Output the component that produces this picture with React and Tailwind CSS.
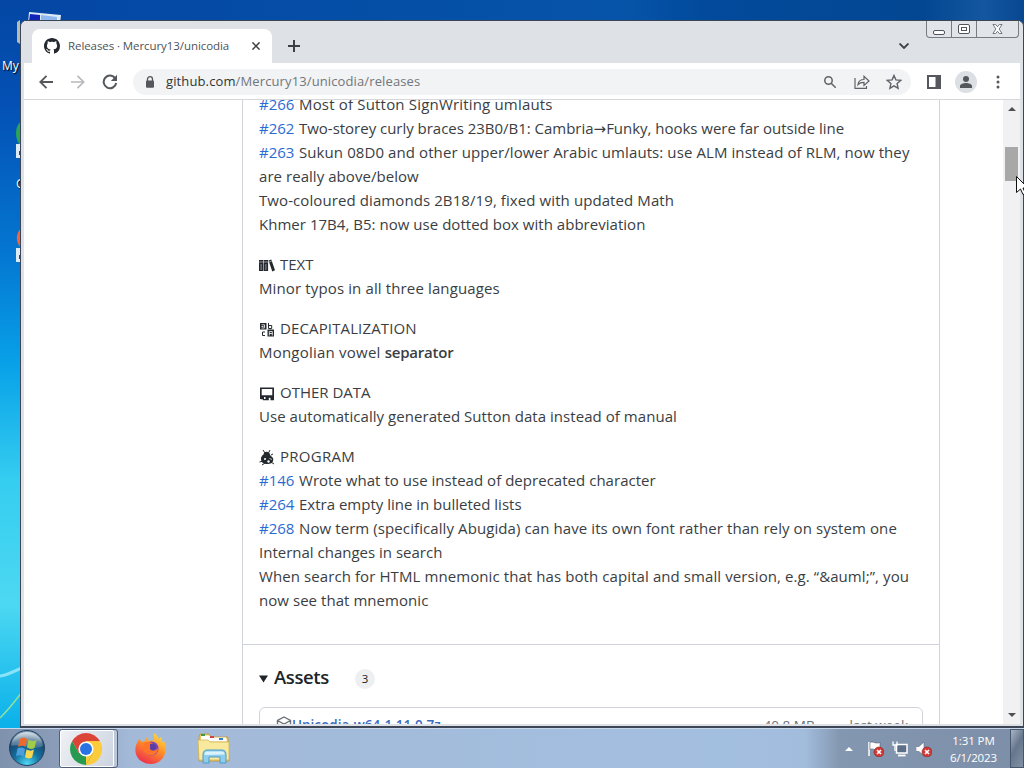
import React from "react";

function Line({ issue, track = "", children }) {
  return (
    <div className="flex h-6 items-center whitespace-pre leading-6">
      {issue && <span className="w-10 text-[#2a6bd2]">{issue}</span>}
      <span className={track}>{children}</span>
    </div>
  );
}

function Heading({ icon, track, children }) {
  return (
    <div className="flex h-6 items-center whitespace-pre leading-6">
      <svg viewBox="0 0 16 16" className="mr-[5px] mt-[3px] h-4 w-4" fill="#24292f">{icon}</svg>
      <span className={track}>{children}</span>
    </div>
  );
}

const books = (
  <g>
    <path d="M0 2h4.300v11H0zM4.800 2h4.300v11H4.800zM9.500 2.600l2.800-1 3.700 10.600-2.700 1.200z" />
    <path d="M0 4h9M2.100 6v6M6.900 6v6M10 4l2.800-1" stroke="#fff" strokeWidth=".5" fill="none" />
  </g>
);
const letters = (
  <g>
    <path d="M1 1h6.500v6.500H1z" />
    <path d="M2.500 2.800h3v3M2.500 4.500h2M2.500 6h3" stroke="#fff" strokeWidth=".8" fill="none" />
    <path d="M9.500 1v5.500h3.200v-3H9.500M6 10H3.500v3.500H6" stroke="#24292f" strokeWidth="1" fill="none" />
    <path d="M8.500 7.500H15v7H8.500z" />
    <path d="M10.300 13.500v-4h3v4M10.300 11.500h3" stroke="#fff" strokeWidth=".8" fill="none" />
  </g>
);
const floppy = (
  <path fillRule="evenodd" d="M1 1.500h14v12.800h-3.500v-2.600H9.800v2.600H4v-.8L1 13zM2.700 3v6.300h10.600V3zM5 11v2h1.500v-2z" />
);
const bug = (
  <g>
    <path d="M4.500 4.500C5 2 7 1.500 8.500 2c2 .5 2.500 1.500 2.500 3l3 3c1 3-1 6-5 6-5 0-7-2-7-5 0-2 1-3.500 2.500-4.500z" />
    <path d="M4 0l2 3M11 0L9.500 3M2 8l3 1M.5 12l4-1M3 15l3-2M12 5l2-1M12 12l3 2" stroke="#24292f" strokeWidth="1" fill="none" />
    <circle cx="6" cy="9" r="1" fill="#fff" />
    <circle cx="9.500" cy="11.500" r="1.200" fill="#fff" />
    <path d="M10.500 8.500l2.500 1" stroke="#fff" strokeWidth=".7" />
  </g>
);

function TabStrip() {
  return (
    <div className="flex h-[42px] items-start bg-[#dee1e6]">
      <div className="ml-2 mt-2 flex h-[34px] w-[240px] items-center rounded-t-lg bg-white pl-3">
        <svg viewBox="0 0 16 16" className="h-4 w-4" fill="#24292f">
          <path d="M8 0C3.580 0 0 3.580 0 8c0 3.540 2.290 6.530 5.470 7.590.4.070.55-.17.55-.38 0-.19-.010-.82-.010-1.490-2.010.37-2.530-.49-2.690-.94-.090-.23-.48-.94-.82-1.130-.28-.15-.68-.52-.010-.53.63-.010 1.080.58 1.230.82.72 1.210 1.870.87 2.330.66.070-.52.28-.87.51-1.070-1.780-.2-3.640-.89-3.640-3.950 0-.87.31-1.590.82-2.150-.080-.2-.36-1.020.080-2.120 0 0 .67-.21 2.200.82.64-.18 1.320-.27 2-.27s1.360.090 2 .27c1.530-1.040 2.200-.82 2.200-.82.44 1.100.16 1.920.080 2.120.51.56.82 1.270.82 2.150 0 3.070-1.870 3.750-3.650 3.950.29.25.54.73.54 1.480 0 1.070-.010 1.930-.010 2.200 0 .21.15.46.55.38A8.010 8.010 0 0 0 16 8c0-4.420-3.580-8-8-8z" />
        </svg>
        <span className="ml-2 w-[184px] whitespace-nowrap text-[11.500px] tracking-[-0.08px] text-[#505357]">Releases · Mercury13/unicodia</span>
        <svg viewBox="0 0 8 8" className="h-2 w-2" stroke="#3c4043" strokeWidth="1.5"><path d="M.4.4l7.200 7.200M7.600.4L.4 7.600" /></svg>
      </div>
      <svg viewBox="0 0 12 12" className="ml-4 mt-[19px] h-3 w-3" stroke="#3c4043" strokeWidth="2"><path d="M6 0v12M0 6h12" /></svg>
      <svg viewBox="0 0 10 6" className="ml-auto mr-[17px] mt-[22px] h-1.5 w-2.5" fill="none" stroke="#3c4043" strokeWidth="1.800"><path d="M.5.5L5 5l4.500-4.500" /></svg>
      <div className="mr-px flex h-[17px] w-[93px] items-stretch divide-x divide-[#777b82] rounded-b border border-t-0 border-[#777b82] bg-[#e1e4e9]">
        <div className="flex w-[25px] items-center justify-center pt-1.5">
          <div className="h-[5px] w-3 rounded-[2px] border border-[#50545c] bg-white" />
        </div>
        <div className="flex w-[25px] items-center justify-center">
          <div className="flex h-[10px] w-3 items-center justify-center rounded-[2px] border border-[#50545c] bg-white">
            <div className="h-1 w-1.5 border border-[#50545c]" />
          </div>
        </div>
        <div className="flex flex-1 items-center justify-center">
          <svg viewBox="0 0 12 11" className="h-[10px] w-[11px]" fill="#fff" stroke="#676b73">
            <path d="M1 .5h3l2 2.500L8 .5h3L7.800 5.500l3.200 5H8L6 8l-2 2.500H1l3.200-5z" />
          </svg>
        </div>
      </div>
    </div>
  );
}

function Toolbar() {
  return (
    <div className="flex h-[37px] items-center border-b border-[#d5d7da] bg-white pl-[15px] pt-px">
      <svg viewBox="0 0 14 14" className="h-3.5 w-3.5" fill="none" stroke="#54575b" strokeWidth="1.800"><path d="M14 7H1.500M7.500.8L1.300 7l6.200 6.200" /></svg>
      <svg viewBox="0 0 14 14" className="ml-[18px] h-3.5 w-3.5" fill="none" stroke="#b7b9bc" strokeWidth="1.700"><path d="M0 7h12.500M6.500.8L12.700 7l-6.200 6.200" /></svg>
      <svg viewBox="0 0 16 16" className="ml-[17px] h-4 w-4" fill="none" stroke="#54575b" strokeWidth="2"><path d="M13.300 4.500A6.300 6.300 0 1 0 14.200 9" /><path d="M15 .8V7H8.800z" fill="#54575b" stroke="none" /></svg>
      <div className="ml-[15px] flex h-[26px] w-[778px] items-center rounded-full bg-[#f1f3f4] pl-3">
        <svg viewBox="0 0 10 12" className="h-3 w-2.5"><path d="M2.500 5V3.200a2.500 2.500 0 0 1 5 0V5" fill="none" stroke="#54575b" strokeWidth="1.300" /><rect x="1" y="4.500" width="8" height="7.200" rx="1" fill="#54575b" /></svg>
        <span className="ml-[11px] whitespace-nowrap text-[13px] tracking-[0.12px] text-[#72767b]"><span className="text-[#303336]">github.com</span>/Mercury13/unicodia/releases</span>
        <svg viewBox="0 0 12 12" className="ml-auto h-3 w-3" fill="none" stroke="#5f6368" strokeWidth="1.500"><circle cx="4.500" cy="4.500" r="3.700" /><path d="M7.200 7.200l4.500 4.500" /></svg>
        <svg viewBox="0 0 16 14" className="ml-[18px] h-3.5 w-4" fill="none" stroke="#5f6368" strokeWidth="1.200"><path d="M1 3v10.300h11.500V11M4 9.500c.5-3.500 2.500-5 6-5V1.300l5 4.700-5 4.500V7.400c-3 0-4.700.6-6 2.100z" /></svg>
        <svg viewBox="0 0 16 16" className="ml-4 mr-[9px] h-4 w-4" fill="none" stroke="#5f6368" strokeWidth="1.400"><path d="M8 1.500l1.900 4.400 4.800.5-3.600 3.200 1 4.700L8 11.900l-4.100 2.400 1-4.700L1.300 6.400l4.800-.5z" /></svg>
      </div>
      <svg viewBox="0 0 14 14" className="ml-4 h-3.5 w-3.5"><path fillRule="evenodd" d="M0 0h14v14H0zM2 2v10h6.500V2z" fill="#54575b" /></svg>
      <div className="ml-[14px] flex h-[22px] w-[22px] items-center justify-center rounded-full bg-[#dcdfe4]">
        <svg viewBox="0 0 12 12" className="h-3 w-3" fill="#54575b"><circle cx="6" cy="3" r="3" /><path d="M0 12V10c0-2 3.500-3 6-3s6 1 6 3v2z" /></svg>
      </div>
      <svg viewBox="0 0 4 14" className="ml-[19px] h-3.5 w-1" fill="#54575b"><circle cx="2" cy="2" r="1.500" /><circle cx="2" cy="7" r="1.500" /><circle cx="2" cy="12" r="1.500" /></svg>
    </div>
  );
}

function Scrollbar() {
  return (
    <div className="flex w-[17px] shrink-0 flex-col items-center bg-[#f1f1f3]">
      <svg viewBox="0 0 8 4" className="mt-[7px] h-1 w-2" fill="#505050"><path d="M4 0l4 4H0z" /></svg>
      <div className="mt-9 h-[34px] w-[13px] bg-[#a8a8a8]" />
      <svg viewBox="0 0 8 4" className="mb-[7px] mt-auto h-1 w-2" fill="#505050"><path d="M0 0h8L4 4z" /></svg>
    </div>
  );
}

function Release() {
  return (
    <div className="ml-[218px] h-[640px] w-[698px] shrink-0 border-x border-[#d0d4da] text-[15px] text-[#3a3e43]">
      <div className="-mt-2 flex flex-col gap-4 border-b border-[#d0d4da] px-4 pb-8">
        <div>
          <Line issue="#266" track="tracking-[0.18px]">Most of Sutton SignWriting umlauts</Line>
          <Line issue="#262" track="tracking-[-0.02px]">Two-storey curly braces 23B0/B1: Cambria<span className="font-['DejaVu_Sans']">→</span>Funky, hooks were far outside line</Line>
          <Line issue="#263" track="tracking-[0.09px]">Sukun 08D0 and other upper/lower Arabic umlauts: use ALM instead of RLM, now they</Line>
          <Line track="tracking-[0.05px]">are really above/below</Line>
          <Line track="tracking-[0.09px]">Two-coloured diamonds 2B18/19, fixed with updated Math</Line>
          <Line track="tracking-[0.03px]">Khmer 17B4, B5: now use dotted box with abbreviation</Line>
        </div>
        <div>
          <Heading icon={books}>TEXT</Heading>
          <Line track="tracking-[0.13px]">Minor typos in all three languages</Line>
        </div>
        <div>
          <Heading icon={letters} track="tracking-[0.13px]">DECAPITALIZATION</Heading>
          <Line track="tracking-[0.22px]">Mongolian vowel <span className="font-semibold tracking-[-0.2px]">separator</span></Line>
        </div>
        <div>
          <Heading icon={floppy}>OTHER DATA</Heading>
          <Line track="tracking-[0.05px]">Use automatically generated Sutton data instead of manual</Line>
        </div>
        <div>
          <Heading icon={bug} track="tracking-[0.28px]">PROGRAM</Heading>
          <Line issue="#146" track="tracking-[0.03px]">Wrote what to use instead of deprecated character</Line>
          <Line issue="#264">Extra empty line in bulleted lists</Line>
          <Line issue="#268" track="tracking-[0.09px]">Now term (specifically Abugida) can have its own font rather than rely on system one</Line>
          <Line>Internal changes in search</Line>
          <Line track="tracking-[0.09px]">When search for HTML mnemonic that has both capital and small version, e.g. “&amp;auml;”, you</Line>
          <Line track="tracking-[0.05px]">now see that mnemonic</Line>
        </div>
      </div>
      <div className="px-4 pt-[17px]">
        <div className="flex h-[30px] items-center text-[#202428]">
          <svg viewBox="0 0 10 8" className="mt-1 h-2 w-[9px]" fill="#202428"><path d="M0 0h10L5 8z" /></svg>
          <span className="ml-1.5 w-[57px] whitespace-nowrap text-[18.500px] font-semibold tracking-[-0.4px]">Assets</span>
          <span className="ml-[24px] mt-[3px] flex h-5 w-5 items-center justify-center rounded-full bg-[#eeeff1] text-[11.500px]">3</span>
        </div>
        <div className="mt-[15px] flex h-10 items-start rounded-t-md border border-[#d0d4da] pl-4 pr-[14px] pt-[7px] text-[13.500px]">
          <svg viewBox="0 0 16 16" className="mt-px h-4 w-4" fill="none" stroke="#6a7078" strokeWidth="1.400"><path d="M8 1l6.500 3.500v7L8 15l-6.500-3.500v-7zM1.500 4.500L8 8l6.500-3.500M8 8v7" /></svg>
          <span className="whitespace-nowrap font-semibold leading-5 text-[#3a6cc0]">Unicodia-w64-1.11.0.7z</span>
          <span className="ml-auto leading-5 text-[#6a7078]">40.8 MB</span>
          <span className="ml-[35px] leading-5 text-[#6a7078]">last week</span>
        </div>
      </div>
    </div>
  );
}

function Badge() {
  return <g><circle cx="11" cy="11" r="5" fill="#d23a36" stroke="#8e2224" strokeWidth=".6" /><path d="M9 9l4 4M13 9l-4 4" stroke="#fff" strokeWidth="1.600" /></g>;
}

function Taskbar() {
  return (
    <div className="flex h-10 items-stretch border-t border-[#c8d8ea] bg-linear-[90deg,#7f92ad_0px,#8b9db8_60px,#a3b9d8_130px,#a3bfe0_720px,#a2bcdc_805px,#8497b0_840px,#7d8fa8_1024px]">
      <svg viewBox="0 0 38 38" className="ml-2 h-[38px] w-[38px]">
        <defs>
          <radialGradient id="orb" cx=".5" cy=".95" r=".95"><stop offset="0" stopColor="#4fd8f4" /><stop offset=".4" stopColor="#13719f" /><stop offset=".75" stopColor="#17476f" /><stop offset="1" stopColor="#8fa9c0" /></radialGradient>
          <linearGradient id="shine" x2="0" y2="1"><stop offset="0" stopColor="#fff" stopOpacity=".7" /><stop offset="1" stopColor="#fff" stopOpacity=".15" /></linearGradient>
        </defs>
        <circle cx="19" cy="19" r="17.500" fill="url(#orb)" stroke="#24405e" />
        <path d="M3 17C4 8 11 3 19 3s15 5 16 14c-8 5-20-3-32 0z" fill="url(#shine)" />
        <path d="M12 10c3-2 5-1 7 0l-1.500 8c-3-2-5-1-7.500 0z" fill="#ee6a2c" />
        <path d="M20.500 10.500c3 2 5 1.500 8 .5l-2 8c-3 1.500-5 1-7.500-.5z" fill="#a0cc48" />
        <path d="M9.500 19.500c3-1.500 5-1 7.500.5l-1.500 7.500c-3-2-5-1.500-7.500-.5z" fill="#4e9ede" />
        <path d="M18.500 20.500c3 1.500 5 1.500 7.500 0l-2 8c-3 1.500-5 1-7-.5z" fill="#fbd650" />
      </svg>
      <div className="ml-[13px] flex w-[59px] rounded-[3px] border border-[#4f5f77] bg-[#bcc7d8]">
        <div className="flex w-[54px] items-center justify-center rounded-[2px] border border-white bg-linear-[120deg,#eef1f5,#ccd4df] pr-0.5">
          <svg viewBox="0 0 32 32" className="h-8 w-8">
            <path d="M16 16L2.150 8A16 16 0 0 1 29.850 8z" fill="#dc4437" />
            <path d="M16 16V8h13.860A16 16 0 0 1 16 32z" fill="#fccb3c" />
            <path d="M2.150 8A16 16 0 0 0 16 32l7-12-14 0z" fill="#279a50" />
            <path d="M2.150 8L9 20l7-12z" fill="#dc4437" />
            <path d="M16 32l7-12-7-4z" fill="#fccb3c" />
            <circle cx="16" cy="16" r="7.600" fill="#fff" /><circle cx="16" cy="16" r="6" fill="#2a73e4" />
          </svg>
        </div>
      </div>
      <svg viewBox="0 0 32 32" className="ml-[17px] mt-[3px] h-8 w-8">
        <defs><linearGradient id="fox" x1=".8" y1="0" x2=".25" y2="1"><stop offset="0" stopColor="#ffe14a" /><stop offset=".45" stopColor="#ff8f26" /><stop offset="1" stopColor="#ee2950" /></linearGradient></defs>
        <path d="M4 7l3 3 3-1 1-4 3 4 5-1 0-7c3 2 4 4 5 6l2-2c1 2 1 3 1 5l2-1c5 10-1 23-13 23C4 32-3 22 2 11z" fill="url(#fox)" />
        <circle cx="16.500" cy="16.500" r="7" fill="#7945b8" />
        <path d="M9 11c4-2 8-1 10 2-3 0-4 1-4 3 0 3 5 4 8 0 0 5-4 8-8 7-6-1-8-6-6-12z" fill="#ff7429" />
        <path d="M15 12c4-1 7 1 6 4-1 2-4 3-6 1z" fill="#5b3da4" />
      </svg>
      <svg viewBox="0 0 34 32" className="ml-[30px] mt-[3px] h-8 w-[34px]">
        <path d="M2 5l1-3h9l2 3h17l1 24H2z" fill="#eec95e" stroke="#bd983e" strokeWidth=".8" />
        <path d="M4 3.500h8l2 2h15l1 4H4z" fill="#fff" />
        <path d="M4 2h4v2H4z" fill="#3a9b4a" /><path d="M13 4h4v2h-4z" fill="#d2453c" /><path d="M22 6h4v2h-4z" fill="#367fc8" />
        <path d="M1 8h10l2 2h19v18H2z" fill="#f8e99d" stroke="#d2b45c" strokeWidth=".8" />
        <path d="M6 31v-8c0-4 2-5 4-5h15c3 0 4 2 4 5v8h-6v-6H12v6z" fill="#8fcdec" stroke="#4e9bc5" />
        <path d="M7.500 23c0-3 1-3.500 3-3.500h14c2 0 3 1 3 3z" fill="#d9f2fc" />
      </svg>
      <div className="ml-auto flex items-center">
        <svg viewBox="0 0 8 4" className="h-1 w-2" fill="#fff"><path d="M4 0l4 4H0z" /></svg>
        <svg viewBox="0 0 16 16" className="ml-[15px] h-4 w-4"><path d="M1 1v14" stroke="#fff" strokeWidth="1.500" /><path d="M2 1.500c3-2 5 2 10 0v7c-5 2-7-2-10 0z" fill="#fff" stroke="#3f4d60" strokeWidth=".5" /><Badge /></svg>
        <svg viewBox="0 0 16 16" className="ml-2 h-4 w-4"><rect x="4.500" y="3.500" width="10.500" height="8.500" fill="#5b6f88" stroke="#fff" strokeWidth="1.500" /><path d="M6 14.500h7.500" stroke="#fff" strokeWidth="1.800" /><path d="M1 .5V4h4V.5M3 4v6" stroke="#fff" strokeWidth="1.300" fill="none" /></svg>
        <svg viewBox="0 0 16 16" className="ml-2 h-4 w-4"><path d="M0 5.500h3L8 1v14L3 10.500H0z" fill="#fff" stroke="#4b5a6d" strokeWidth=".5" /><Badge /></svg>
        <div className="ml-[15px] w-[53px] text-center text-[11.500px] leading-[17px] tracking-[-0.1px] text-white">
          <div className="whitespace-nowrap">1:31 PM</div>
          <div className="whitespace-nowrap">6/1/2023</div>
        </div>
        <div className="ml-[10px] h-full w-[14px] border border-[#46566c] bg-linear-[120deg,#a9b5c5,#66768c_45%,#8291a5]" />
      </div>
    </div>
  );
}

export default function App() {
  return (
    <div className="relative flex h-[768px] w-[1024px] flex-col overflow-hidden bg-[#0450a6] font-['Open_Sans','Noto_Sans',sans-serif]">
      <svg viewBox="0 0 1024 728" className="absolute left-0 top-0 h-[728px] w-[1024px]">
        <defs>
          <linearGradient id="sky" x2="0" y2="1"><stop offset="0" stopColor="#0447a4" /><stop offset=".14" stopColor="#0450b4" /><stop offset=".35" stopColor="#0477d2" /><stop offset=".5" stopColor="#08a1e8" /><stop offset=".66" stopColor="#35cdf0" /><stop offset=".83" stopColor="#4cd8f2" /><stop offset="1" stopColor="#0ab0ea" /></linearGradient>
          <linearGradient id="top"><stop offset="0" stopColor="#0447a4" /><stop offset=".6" stopColor="#0654a9" /><stop offset=".68" stopColor="#024a9c" /><stop offset=".9" stopColor="#034792" /><stop offset=".96" stopColor="#1457a0" /><stop offset="1" stopColor="#064790" /></linearGradient>
        </defs>
        <rect width="22" height="728" fill="url(#sky)" />
        <rect x="21" width="1003" height="22" fill="url(#top)" />
        <path d="M0 676c8-1 14-5 22-8" stroke="#8be3fa" strokeWidth="3" fill="none" />
        <path d="M0 718c8-8 16-18 22-26" stroke="#8fe0a0" strokeWidth="1.500" fill="none" />
        <path d="M17 22l3-2v24l-3-2z" fill="#b8bcb4" />
        <path d="M29 12l32 3-1 8H28z" fill="#dceaf8" /><path d="M30 14l10 1v6H29z" fill="#1024b8" /><path d="M41 15l16 2v4H41z" fill="#8fb8ee" />
        <path d="M22 121c-8 4-8 20 0 26z" fill="#2ca458" /><path d="M16 144h6v14h-6z" fill="#dcebf8" /><path d="M19 151h3v4h-3z" fill="#234a84" />
        <path d="M22 228c-7 4-7 16 0 20z" fill="#ef6442" /><path d="M16 248h6v14h-6z" fill="#dcebf8" /><path d="M19 255h3v4h-3z" fill="#234a84" />
      </svg>
      <span className="absolute left-0.5 top-[57px] text-[12px] leading-[18px] text-white [text-shadow:1px_1px_1px_#000]">My</span>
      <span className="absolute left-4 top-[175px] text-[12px] leading-[18px] text-white [text-shadow:1px_1px_1px_#000]">G</span>
      <div className="relative ml-5 mt-5 flex h-[708px] w-[1004px] flex-col rounded-t-md border border-b-2 border-[#3c4657] bg-[#dee1e6] pb-0.5 pl-[3px] pr-[3px]">
        <TabStrip />
        <Toolbar />
        <div className="flex min-h-0 flex-1 overflow-hidden bg-white">
          <div className="flex min-w-0 flex-1 overflow-hidden"><Release /></div>
          <Scrollbar />
        </div>
      </div>
      <Taskbar />
      <svg viewBox="0 0 12 19" className="absolute left-[1016px] top-[176px] h-[19px] w-3"><path d="M.5.5v16l4-3.500 2.500 5.500 2.500-1-2.500-5.500H12z" fill="#fff" stroke="#111" /></svg>
    </div>
  );
}
